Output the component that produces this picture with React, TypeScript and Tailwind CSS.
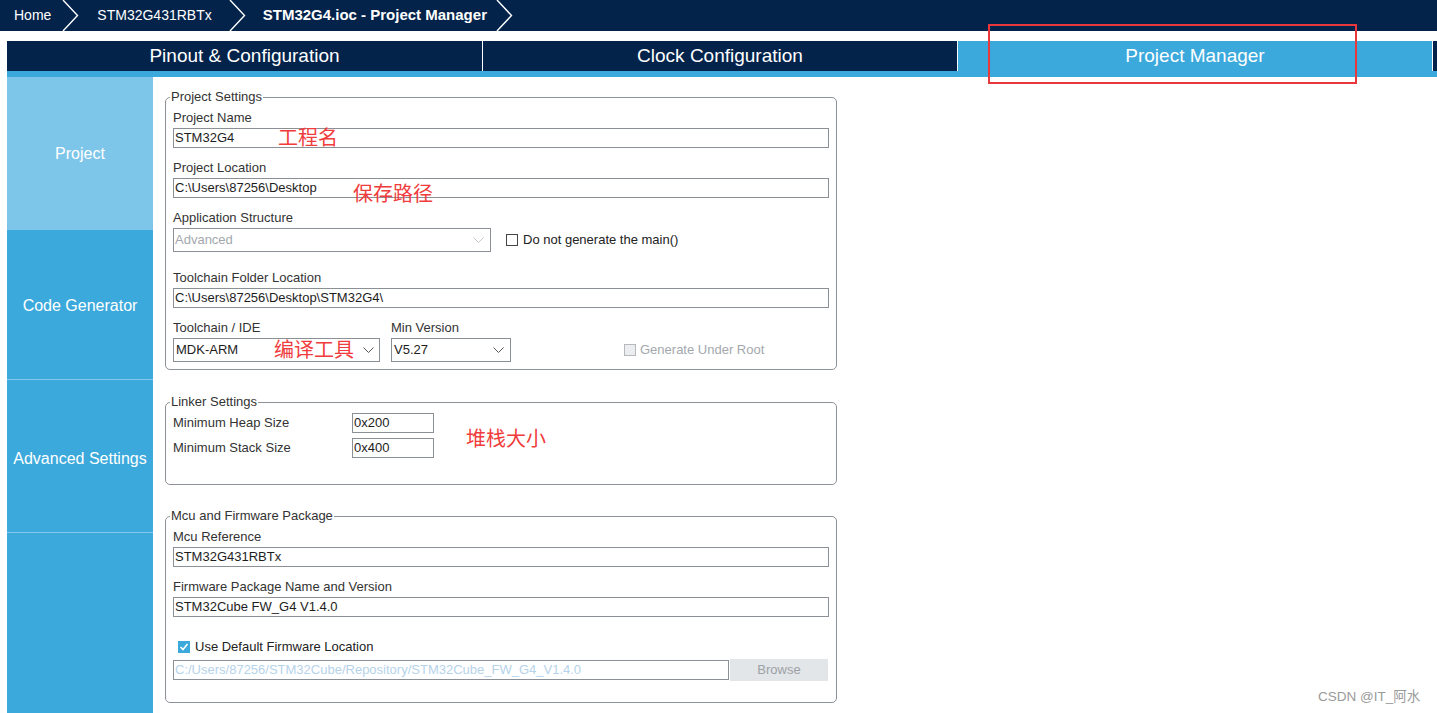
import React from "react";

const Chevron = () => (
  <svg width="17" height="31" viewBox="0 0 17 31" className="shrink-0">
    <polyline points="1,0 15.5,15.5 1,31" fill="none" stroke="#ffffff" strokeWidth="1.4" />
  </svg>
);

const Caret = ({ color = "#555" }: { color?: string }) => (
  <svg width="11" height="7" viewBox="0 0 11 7" className="shrink-0">
    <polyline points="0.5,0.5 5.5,5.5 10.5,0.5" fill="none" stroke={color} strokeWidth="1" />
  </svg>
);

const Label = ({ children, className = "" }: { children: React.ReactNode; className?: string }) => (
  <div className={`h-[14px] leading-[14px] text-[13px] text-[#333] whitespace-nowrap ${className}`}>{children}</div>
);

const Field = ({ value, className = "" }: { value: string; className?: string }) => (
  <div className={`h-[20px] border border-[#8a9096] bg-white flex items-center px-[1px] text-[13px] text-[#1d1d1d] whitespace-nowrap ${className}`}>
    {value}
  </div>
);

const Group = ({ title, children, className = "" }: { title: string; children: React.ReactNode; className?: string }) => (
  <fieldset className={`border border-[#8d9298] rounded-[5px] pl-[7px] pr-[7px] ${className}`}>
    <legend className="ml-[-3px] px-[1px] text-[13px] leading-[14px] text-[#333]">{title}</legend>
    {children}
  </fieldset>
);

export default function App() {
  return (
    <div className="relative w-[1437px] h-[713px] overflow-hidden bg-white font-['Liberation_Sans','Noto_Sans_CJK_SC',sans-serif]">
      {/* breadcrumb */}
      <div className="h-[31px] bg-[#03234b] flex items-center text-white text-[14px]">
        <span className="ml-[14px] mr-[11px]">Home</span>
        <Chevron />
        <span className="ml-[18px] mr-[17px]">STM32G431RBTx</span>
        <Chevron />
        <span className="ml-[17px] mr-[9px] font-bold text-[15px]">STM32G4.ioc - Project Manager</span>
        <Chevron />
      </div>

      {/* tabs */}
      <div className="mt-[10px] ml-[7px] flex h-[30px] text-white text-[19px]">
        <div className="w-[475px] bg-[#03234b] flex items-center justify-center">Pinout &amp; Configuration</div>
        <div className="w-[1px] bg-white" />
        <div className="w-[474px] bg-[#03234b] flex items-center justify-center">Clock Configuration</div>
        <div className="w-[1px] bg-white" />
        <div className="w-[474px] bg-[#3ba9dc] flex items-center justify-center">Project Manager</div>
        <div className="w-[1px] bg-white" />
        <div className="flex-1 bg-[#03234b]" />
      </div>
      <div className="ml-[7px] h-[6px] bg-[#3ba9dc]" />

      <div className="flex ml-[7px]">
        {/* sidebar */}
        <div className="w-[146px] h-[636px] bg-[#3ba9dc] flex flex-col text-white text-[16px]">
          <div className="h-[153px] bg-[#7dc5e9] flex items-center justify-center">Project</div>
          <div className="h-[150px] pt-[3px] flex items-center justify-center border-b border-[#80c8ec]">Code Generator</div>
          <div className="h-[153px] pt-[5px] flex items-center justify-center border-b border-[#80c8ec] whitespace-nowrap">Advanced Settings</div>
        </div>

        {/* content */}
        <div className="pl-[12px] pt-[13px] w-[684px]">
          <Group title="Project Settings" className="pb-[7px]">
            <Label className="mt-[7px]">Project Name</Label>
            <Field value="STM32G4" className="mt-[3px]" />
            <Label className="mt-[13px]">Project Location</Label>
            <Field value="C:\Users\87256\Desktop" className="mt-[3px]" />
            <Label className="mt-[13px]">Application Structure</Label>
            <div className="mt-[3px] flex items-center h-[24px]">
              <div className="w-[318px] h-[24px] border border-[#8a9096] flex items-center justify-between pl-[1px] pr-[6px] text-[13px] text-[#a3a8ad]">
                <span>Advanced</span>
                <Caret color="#c4c8cc" />
              </div>
              <div className="ml-[15px] w-[12px] h-[12px] border border-[#444]" />
              <span className="ml-[5px] text-[13px] text-[#222]">Do not generate the main()</span>
            </div>
            <Label className="mt-[19px]">Toolchain Folder Location</Label>
            <Field value="C:\Users\87256\Desktop\STM32G4\" className="mt-[3px]" />
            <div className="mt-[13px] flex">
              <Label className="w-[218px]">Toolchain / IDE</Label>
              <Label>Min Version</Label>
            </div>
            <div className="mt-[3px] flex items-center">
              <div className="w-[207px] h-[24px] border border-[#8a9096] flex items-center justify-between pl-[2px] pr-[5px] text-[13px] text-[#1d1d1d]">
                <span>MDK-ARM</span>
                <Caret />
              </div>
              <div className="ml-[11px] w-[120px] h-[24px] border border-[#8a9096] flex items-center justify-between pl-[2px] pr-[6px] text-[13px] text-[#1d1d1d]">
                <span>V5.27</span>
                <Caret />
              </div>
              <div className="ml-[113px] w-[12px] h-[12px] border border-[#b5b9bd] bg-[#ebedef]" />
              <span className="ml-[4px] text-[13px] text-[#a3a8ad]">Generate Under Root</span>
            </div>
          </Group>

          <Group title="Linker Settings" className="mt-[25px] pb-[26px]">
            <div className="mt-[4px] flex items-center">
              <Label className="w-[179px]">Minimum Heap Size</Label>
              <Field value="0x200" className="w-[82px]" />
            </div>
            <div className="mt-[5px] flex items-center">
              <Label className="w-[179px]">Minimum Stack Size</Label>
              <Field value="0x400" className="w-[82px]" />
            </div>
          </Group>

          <Group title="Mcu and Firmware Package" className="mt-[24px] pb-[21px]">
            <Label className="mt-[7px]">Mcu Reference</Label>
            <Field value="STM32G431RBTx" className="mt-[3px]" />
            <Label className="mt-[13px]">Firmware Package Name and Version</Label>
            <Field value="STM32Cube FW_G4 V1.4.0" className="mt-[3px]" />
            <div className="mt-[23px] h-[14px] flex items-center pl-[5px]">
              <div className="w-[12px] h-[12px] bg-[#3ba9dc] flex items-center justify-center">
                <svg width="10" height="10" viewBox="0 0 10 10">
                  <polyline points="1.5,5 4,7.5 8.5,2" fill="none" stroke="#fff" strokeWidth="1.6" />
                </svg>
              </div>
              <span className="ml-[5px] text-[13px] text-[#222]">Use Default Firmware Location</span>
            </div>
            <div className="mt-[5px] flex items-center h-[22px]">
              <div className="w-[556px] h-[20px] border border-[#8a9096] flex items-center px-[1px] text-[13px] text-[#b5d3ea] whitespace-nowrap">
                C:/Users/87256/STM32Cube/Repository/STM32Cube_FW_G4_V1.4.0
              </div>
              <div className="ml-[1px] w-[98px] h-[22px] bg-[#e3e6e9] flex items-center justify-center text-[13px] text-[#9ca1a6]">Browse</div>
            </div>
          </Group>
        </div>
      </div>

      {/* annotations */}
      <div className="absolute left-[988px] top-[24px] w-[369px] h-[60px] border-2 border-[#e8383b]" />
      <div className="absolute left-[278px] top-[126px] text-[20px] leading-[24px] text-[#f03c3c]">工程名</div>
      <div className="absolute left-[353px] top-[182px] text-[20px] leading-[24px] text-[#f03c3c]">保存路径</div>
      <div className="absolute left-[274px] top-[338px] text-[20px] leading-[24px] text-[#f03c3c]">编译工具</div>
      <div className="absolute left-[466px] top-[427px] text-[20px] leading-[24px] text-[#f03c3c]">堆栈大小</div>
      <div className="absolute left-[1318px] top-[688px] text-[13.5px] leading-[18px] text-[#9a9a9a]">CSDN @IT_阿水</div>
    </div>
  );
}
